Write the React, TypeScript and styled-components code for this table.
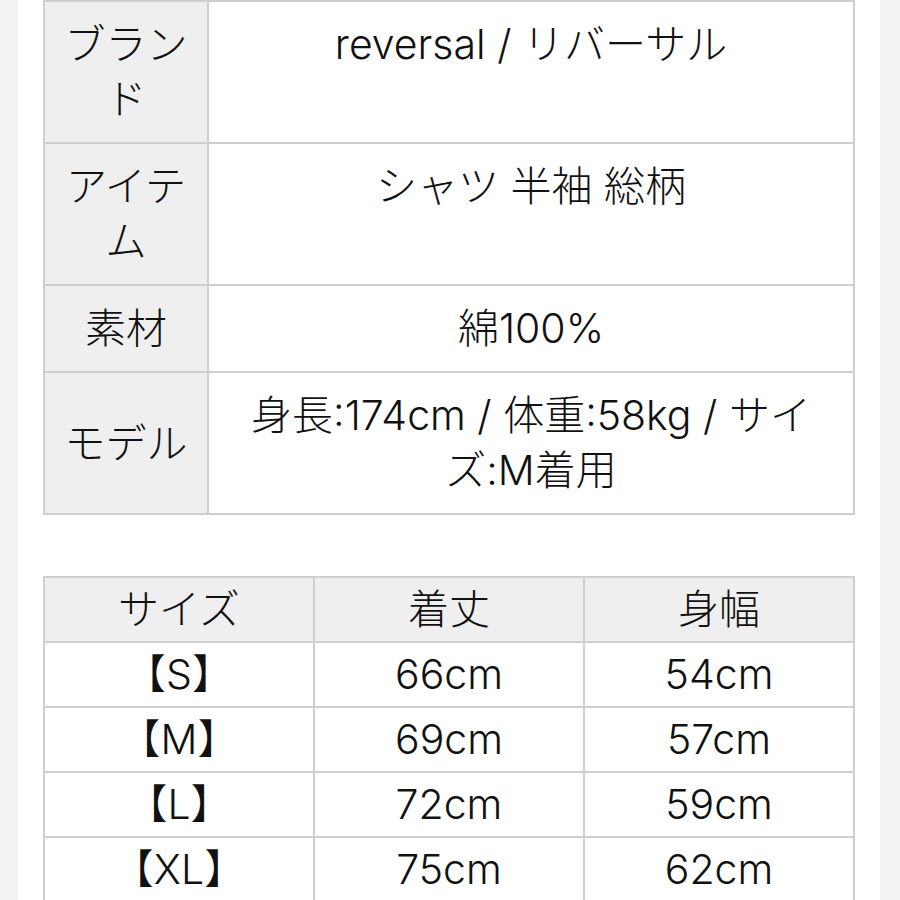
import React from "react";
import styled, { createGlobalStyle } from "styled-components";

const Global = createGlobalStyle`
  html, body {
    margin: 0;
    padding: 0;
    background: #f3f3f3;
  }
  body {
    font-family: Inter, "Noto Sans CJK JP", sans-serif;
    font-weight: 300;
    color: #111111;
  }
`;

const Page = styled.div`
  width: 862px;
  margin-left: 18px;
  background: #ffffff;
  min-height: 900px;
  padding: 0 25px;
  box-sizing: border-box;
  display: flex;
  flex-direction: column;
  gap: 61px;
`;

const Table = styled.table`
  width: 812px;
  border-collapse: collapse;
  table-layout: fixed;
  border: 2px solid #cfcfcf;
  font-size: 41px;
  line-height: 55px;
`;

const Label = styled.th`
  background: #efefef;
  font-weight: 300;
  border: 2px solid #cfcfcf;
  padding: 15px 8px;
  text-align: center;
  vertical-align: middle;
`;

const Value = styled.td`
  background: #ffffff;
  border: 2px solid #cfcfcf;
  padding: 15px 12px;
  text-align: center;
  vertical-align: top;
`;

const HeadCell = styled.th`
  background: #efefef;
  font-weight: 300;
  border: 2px solid #cfcfcf;
  padding: 4px 8px;
  text-align: center;
`;

const Cell = styled.td`
  background: #ffffff;
  border: 2px solid #cfcfcf;
  padding: 4px 8px;
  text-align: center;
`;

const info = [
  { label: "ブランド", value: "reversal / リバーサル" },
  { label: "アイテム", value: "シャツ 半袖 総柄" },
  { label: "素材", value: "綿100%" },
  { label: "モデル", value: "身長:174cm / 体重:58kg / サイズ:M着用" },
];

const sizes = [
  ["【S】", "66cm", "54cm"],
  ["【M】", "69cm", "57cm"],
  ["【L】", "72cm", "59cm"],
  ["【XL】", "75cm", "62cm"],
];

export default function App() {
  return (
    <>
      <Global />
      <Page>
        <Table>
          <colgroup>
            <col style={{ width: 164 }} />
            <col />
          </colgroup>
          <tbody>
            {info.map((r) => (
              <tr key={r.label}>
                <Label>{r.label}</Label>
                <Value>{r.value}</Value>
              </tr>
            ))}
          </tbody>
        </Table>
        <Table>
          <thead>
            <tr>
              <HeadCell>サイズ</HeadCell>
              <HeadCell>着丈</HeadCell>
              <HeadCell>身幅</HeadCell>
            </tr>
          </thead>
          <tbody>
            {sizes.map((r) => (
              <tr key={r[0]}>
                {r.map((c, i) => (
                  <Cell key={i}>{c}</Cell>
                ))}
              </tr>
            ))}
          </tbody>
        </Table>
      </Page>
    </>
  );
}
